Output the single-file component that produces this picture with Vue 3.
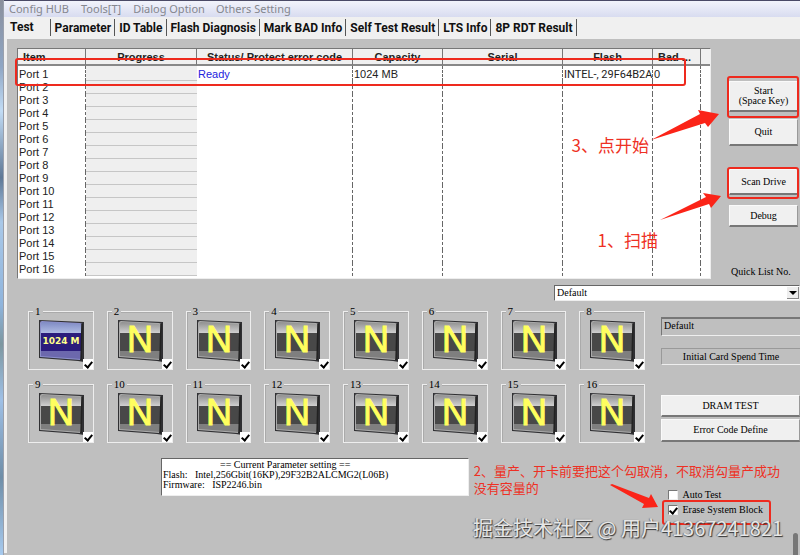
<template>
  <div class="window">
    <div class="desktop-edge"></div>
    <div class="client">
      <nav class="menubar">
        <a v-for="m in menus" :key="m" href="#" class="menu">{{ m }}</a>
      </nav>
      <div class="tabs" role="tablist">
        <button v-for="t in tabs" :key="t" type="button" role="tab" class="tab" :class="{ active: t === activeTab }" @click="activeTab = t">{{ t }}</button>
      </div>

      <main class="panel">
        <section class="top">
          <div class="port-list">
            <table class="ports">
              <colgroup>
                <col class="c-item"><col class="c-progress"><col><col class="c-capacity">
                <col class="c-serial"><col class="c-flash"><col class="c-bad"><col class="c-end">
              </colgroup>
              <thead>
                <tr>
                  <th class="left">Item</th>
                  <th>Progress</th>
                  <th>Status/ Protect error code</th>
                  <th>Capacity</th>
                  <th>Serial</th>
                  <th>Flash</th>
                  <th class="left">Bad ...</th>
                  <th></th>
                </tr>
              </thead>
              <tbody>
                <tr v-for="p in ports" :key="p.id">
                  <td>Port {{ p.id }}</td>
                  <td class="progress"></td>
                  <td class="status">{{ p.status }}</td>
                  <td>{{ p.capacity }}</td>
                  <td></td>
                  <td class="flash">{{ p.flash }}</td>
                  <td>{{ p.bad }}</td>
                  <td></td>
                </tr>
              </tbody>
            </table>
            <div class="mark row-mark"></div>
          </div>
          <div class="side">
            <div class="marked start">
              <button type="button" class="btn">Start<br>(Space Key)</button>
            </div>
            <button type="button" class="btn quit">Quit</button>
            <div class="marked scan">
              <button type="button" class="btn">Scan Drive</button>
            </div>
            <button type="button" class="btn debug">Debug</button>
            <label class="quick-label" for="quick">Quick List No.</label>
          </div>
        </section>

        <div class="quick-row">
          <div class="combo">
            <select id="quick" v-model="quick">
              <option>Default</option>
            </select>
            <span class="combo-arrow"></span>
          </div>
        </div>

        <section class="middle">
          <div class="slots">
            <div v-for="s in slots" :key="s.id" class="slot">
              <label class="slot-no" :for="'slot' + s.id">{{ s.id }}</label>
              <svg class="drive" viewBox="0 0 46 42" width="46" height="42">
                <defs>
                  <linearGradient :id="'g' + s.id" x1="0" y1="0" x2="0" y2="1">
                    <stop offset="0" :stop-color="s.size ? '#7f8bc4' : '#8f8f8f'" />
                    <stop offset="1" :stop-color="s.size ? '#b3bfe6' : '#d6d6d6'" />
                  </linearGradient>
                </defs>
                <path d="M0 0L45 2L45 42L39 41L0 38Z" fill="#303033" />
                <path d="M1 3Q1 1 3 1L41 3Q43 3 43 5L42 38L41 40L1 37Z" :fill="s.size ? '#8c8fca' : '#aaa'" />
                <path d="M2 4Q2 2 4 2L40 4Q42 4 42 6V14H2Z" :fill="`url(#g${s.id})`" />
                <path d="M2 13H42V32H2Z" :fill="s.size ? '#2b1c7c' : '#484848'" />
                <path d="M2 31H42V39L2 36Z" :fill="s.size ? '#6c68ad' : '#7f7f7f'" />
                <path d="M43 4L42 40" stroke="#222" stroke-width="1.5" />
                <text v-if="s.size" x="22" y="24" class="size">{{ s.size }}</text>
                <text v-else x="22" y="32" class="letter">N</text>
              </svg>
              <input :id="'slot' + s.id" v-model="s.on" type="checkbox" class="check slot-check">
            </div>
          </div>
          <div class="actions">
            <input class="field" type="text" value="Default" aria-label="Setting name" readonly>
            <div class="spend">Initial Card Spend Time</div>
            <button type="button" class="btn dram">DRAM TEST</button>
            <button type="button" class="btn error-code">Error Code Define</button>
          </div>
        </section>

        <section class="bottom">
          <div class="params">
            <div class="params-title">== Current Parameter setting ==</div>
            <div>Flash: &nbsp; Intel,256Gbit(16KP),29F32B2ALCMG2(L06B)</div>
            <div>Firmware: &nbsp; ISP2246.bin</div>
          </div>
          <div class="options">
            <label class="option"><input v-model="autoTest" type="checkbox" class="check">Auto Test</label>
            <label class="option"><input v-model="eraseBlock" type="checkbox" class="check">Erase System Block</label>
            <div class="mark erase-mark"></div>
          </div>
        </section>
      </main>
    </div>

    <svg class="arrow arrow-start" width="72" height="36" viewBox="0 0 72 36">
      <path d="M0 31L49 5L47 1L68 5L57 18L54 14Z" />
    </svg>
    <svg class="arrow arrow-scan" width="72" height="36" viewBox="0 0 72 36">
      <path d="M0 29L46 6L43 2L61 5L51 17L49 13Z" />
    </svg>
    <svg class="arrow arrow-erase" width="54" height="32" viewBox="0 0 54 32">
      <path d="M0 3L2 2L39 16L41 12L48 25L32 26L34 22Z" />
    </svg>
    <div class="note note-start">3、点开始</div>
    <div class="note note-scan">1、扫描</div>
    <div class="note note-erase">2、量产、开卡前要把这个勾取消，不取消勾量产成功<br>没有容量的</div>
    <div class="watermark">掘金技术社区 @ 用户41367241821</div>
    <div class="thumb"></div>
  </div>
</template>

<script setup>
import { ref } from 'vue'

const menus = ['Config HUB', 'Tools[T]', 'Dialog Option', 'Others Setting']
const tabs = ['Test', 'Parameter', 'ID Table', 'Flash Diagnosis', 'Mark BAD Info', 'Self Test Result', 'LTS Info', '8P RDT Result']
const activeTab = ref('Test')
const quick = ref('Default')
const autoTest = ref(false)
const eraseBlock = ref(true)

const ports = Array.from({ length: 16 }, (_, i) => ({ id: i + 1 }))
Object.assign(ports[0], { status: 'Ready', capacity: '1024 MB', flash: 'INTEL-, 29F64B2A', bad: '0' })

const slots = ref(ports.map(p => ({ id: p.id, size: p.id === 1 ? '1024 M' : '', on: true })))
</script>

<style>
body { margin: 0; background: #bfbfbf; }
</style>

<style scoped>
.window { position: relative; display: flex; min-height: 100vh; overflow: hidden; background: #bfbfbf; font: 10px/10px "Liberation Serif", serif; color: #000; }
.window * { box-sizing: border-box; }
.desktop-edge { width: 3px; background: linear-gradient(#8a8f9c, #8fa6c4 12%, #c2dcf5 20%, #5e7896 32%, #a9c8e8 40%, #8fb4dc 55%, #7d97a0 62%, #9fc0e6 72%, #6f8ea8 86%, #a7caee); }
.client { flex: 1; min-width: 0; border-left: 1px solid #9aa0ac; }

.menubar { display: flex; gap: 12px; height: 17px; padding-left: 5px; background: linear-gradient(#f2f4fb, #d8dcf0); border-top: 1px solid #4a4a66; }
.menu { font: 11px/15px "Noto Sans", sans-serif; color: #85878f; text-decoration: none; }
.menu:last-child { margin-left: -1px; }
.tabs { display: flex; height: 22px; padding: 2px 0 3px; background: #f0f0f0; }
.tab { padding: 1px 3px 0 4px; border: 0; border-right: 1px solid #555; background: none; font: bold 12px/14px Roboto, "Liberation Sans", sans-serif; color: #111; white-space: nowrap; }
.tab.active { padding: 0 16px 2px 6px; }

.panel { padding: 9px 0 0 10px; border-left: 3px solid #f0f0f0; }
.top { display: flex; gap: 18px; padding-right: 2px; }
.port-list { position: relative; flex: 1; min-width: 0; height: 231px; background: #fff; border: 1px solid #777; border-right-color: #eee; border-bottom-color: #eee; }
.ports { width: 100%; table-layout: fixed; border-collapse: separate; border-spacing: 0; font: 11px/13px "Liberation Sans", sans-serif; color: #222; }
.c-item { width: 68px; }
.c-progress { width: 111px; }
.c-capacity { width: 90px; }
.c-serial { width: 120px; }
.c-flash { width: 90px; }
.c-bad { width: 48px; }
.c-end { width: 9px; }
.ports th { height: 17px; padding: 1px 0 0; background: #f0f0f0; border-right: 1px solid #777; border-bottom: 2px solid #888; font: bold 11px/14px "Liberation Sans", sans-serif; white-space: nowrap; overflow: hidden; }
.ports th.left { padding-left: 5px; text-align: left; }
.ports th:last-child, .ports td:last-child { border-right: 0; }
.ports td { height: 13px; padding: 0 0 0 1px; border-right: 1px dashed #666; white-space: nowrap; }
.ports tbody tr:first-child td { padding-top: 2px; }
.ports td.progress { background: #efefef; border-right: 0; border-bottom: 1px solid #c6c6c6; }
.ports td.status { color: #2222dd; }
.ports td.flash { font-family: Roboto, "Liberation Sans", sans-serif; }

.side { display: flex; flex-direction: column; width: 69px; padding-top: 33px; }
.btn { width: 100%; padding: 0; border: 1px solid #fafafa; border-right-color: #999; border-bottom: 2px solid #777; border-radius: 0; background: #f0f0f0; font: 10px/10px "Liberation Serif", serif; color: #000; }
.marked { position: relative; display: flex; }
.marked::after, .mark { content: ""; position: absolute; border: 2px solid #ee2a1e; border-radius: 3px; pointer-events: none; }
.start { height: 31px; }
.start::after { inset: -5px -1px -6px -2px; }
.quit { height: 27px; margin-top: 7px; }
.scan { height: 26px; margin-top: 23px; }
.scan::after { inset: -2px -1px -4px -2px; }
.debug { height: 22px; margin-top: 10px; }
.quick-label { margin: auto 0 2px 2px; }
.row-mark { inset: 9px 24px auto -3px; height: 28px; }

.quick-row { display: flex; justify-content: flex-end; margin-top: 6px; }
.combo { position: relative; width: 246px; }
.combo select { display: block; width: 100%; height: 16px; padding: 0 2px; border: 1px solid #666; border-right-color: #eee; border-bottom-color: #eee; border-radius: 0; background: #fff; appearance: none; font: 10px/12px "Liberation Serif", serif; color: #000; }
.combo-arrow { position: absolute; top: 2px; right: 1px; width: 12px; height: 12px; background: #eee; border-right: 1px solid #888; border-bottom: 1px solid #888; pointer-events: none; }
.combo-arrow::after { content: ""; position: absolute; top: 4px; left: 2px; border: 4px solid transparent; border-top-color: #000; border-bottom: 0; }

.middle { display: flex; gap: 16px; margin-top: 10px; padding-left: 11px; }
.slots { flex: 1; display: grid; grid-template-columns: repeat(8, 1fr); gap: 14px 13px; }
.slot { position: relative; height: 59px; padding: 8px 0 0 10px; border: 1px solid #eee; box-shadow: inset 1px 1px #aaa; }
.slot-no { position: absolute; top: -7px; left: 4px; padding: 0 2px; background: #bfbfbf; font-size: 11px; line-height: 12px; }
.drive { display: block; }
.size { font: bold 9px "DejaVu Sans", sans-serif; fill: #ffff8c; text-anchor: middle; }
.letter { font: 36px "Liberation Sans", sans-serif; fill: #ffff5e; stroke: #ffff5e; text-anchor: middle; }
.check { position: relative; appearance: none; width: 10px; height: 10px; margin: 0; background: #fff; border: 1px solid #777; border-right-color: #eee; border-bottom-color: #eee; }
.check:checked::after { content: ""; position: absolute; top: 0; left: 2px; width: 3px; height: 6px; border: solid #000; border-width: 0 2px 2px 0; transform: rotate(40deg); }
.slot-check { position: absolute; right: 0; bottom: 0; border: 0; }
.slot-check:checked::after { top: 1px; left: 3px; }

.actions { width: 139px; padding-top: 6px; }
.actions > * { display: block; }
.field { width: 100%; height: 19px; padding: 0 2px 4px; border: 1px solid #eee; border-top: 2px solid #777; border-left-color: #777; border-right: 0; background: #bfbfbf; font: 10px/10px "Liberation Serif", serif; color: #000; }
.spend { height: 17px; margin-top: 12px; border: 1px solid #999; border-right: 0; border-bottom-color: #eee; line-height: 15px; text-align: center; }
.dram { height: 22px; margin-top: 30px; }
.error-code { height: 23px; margin-top: 2px; }

.bottom { display: flex; align-items: flex-start; justify-content: space-between; padding: 15px 37px 38px 144px; }
.params { width: 308px; height: 38px; padding: 1px; background: #fff; border: 1px solid #666; border-right-color: #eee; border-bottom-color: #eee; white-space: nowrap; }
.params-title { padding-left: 57px; }
.options { position: relative; display: flex; flex-direction: column; gap: 5px; margin-top: 32px; }
.option { display: flex; align-items: center; gap: 4px; white-space: nowrap; }
.erase-mark { inset: 10px -8px -10px -6px; }

.arrow { position: absolute; fill: #fb2418; pointer-events: none; }
.arrow-start { top: 109px; right: 77px; }
.arrow-scan { top: 191px; right: 68px; }
.arrow-erase { top: 482px; right: 136px; }
.note { position: absolute; font: 17px/20px "Noto Sans CJK SC", sans-serif; color: #ee3024; white-space: nowrap; }
.note-start { top: 135px; right: 151px; }
.note-scan { top: 230px; right: 142px; }
.note-erase { top: 462px; right: 20px; font-size: 13px; line-height: 17px; }
.watermark { position: absolute; top: 516px; right: 17px; font: 20px/24px "Noto Sans CJK SC", sans-serif; color: #e6e6e6; text-shadow: 1px 1px 1px #333, -1px 0 1px #777; white-space: nowrap; }
.thumb { position: absolute; right: 2px; bottom: 0; width: 5px; height: 22px; border-radius: 3px 3px 0 0; background: #777; }
</style>
